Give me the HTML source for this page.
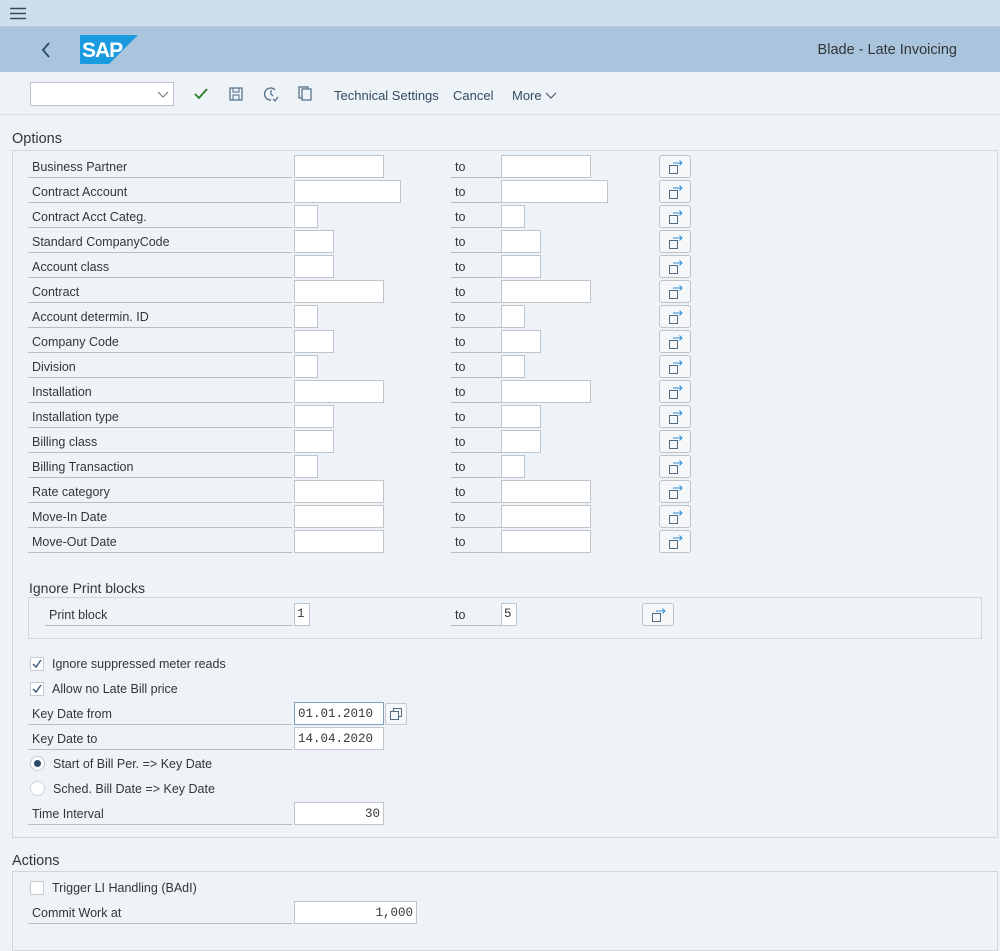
<!DOCTYPE html>
<html><head><meta charset="utf-8"><style>
*{box-sizing:border-box;margin:0;padding:0}
body{width:1000px;height:934px;overflow:hidden;background:#eef3f8;font-family:"Liberation Sans",sans-serif;font-size:12.5px;color:#32363a;position:relative}
.a{position:absolute}
.top{left:0;top:0;width:1000px;height:27px;background:#cfdeeb;border-bottom:1px solid #b9cbdb}
.hdr{left:0;top:27px;width:1000px;height:45px;background:#a9c4dc}
.tb{left:0;top:72px;width:1000px;height:43px;background:#eef3f8;border-bottom:1px solid #d9e1e8}
.lbl{position:absolute;left:28px;width:264px;height:23px;border-bottom:1px solid #b9bec3;padding:5px 0 0 4px}
.to{position:absolute;left:451px;width:50px;height:23px;border-bottom:1px solid #b9bec3;padding:5px 0 0 4px}
.f{position:absolute;height:23px;background:#fff;border:1px solid #bfc5ca;font-family:"Liberation Mono",monospace;font-size:12.5px;padding:4px 3px}
.btn{position:absolute;left:659px;width:32px;height:23px;background:#f6f7f8;border:1px solid #bfc3c7;border-radius:3px}
.btn svg{position:absolute;left:8px;top:3px}
.box{position:absolute;border:1px solid #cfd6dc}
.cb{position:absolute;left:30px;width:14px;height:14px;background:#fff;border:1px solid #c6cbd0}
</style></head><body>
<div class="a top"><svg class="a" style="left:10px;top:7px" width="16" height="13"><path d="M0 1.5H16M0 6.5H16M0 11.5H16" stroke="#354a5f" stroke-width="1.6"/></svg></div>
<div class="a hdr">
<svg class="a" style="left:40px;top:14px" width="12" height="18"><path d="M9 2L3 9L9 16" stroke="#2a4a6b" stroke-width="1.8" fill="none"/></svg>
<svg class="a" style="left:80px;top:8px" width="58" height="29"><polygon points="0,0 58,0 29,29 0,29" fill="#1a9be0"/><text x="2" y="22" font-family="Liberation Sans" font-weight="bold" font-size="21" fill="#fff" letter-spacing="-1">SAP</text></svg>
<div class="a" style="right:43px;top:15px;font-size:14.5px;color:#32363a">Blade - Late Invoicing</div>
</div>
<div class="a tb">
<div class="a" style="left:30px;top:10px;width:144px;height:24px;background:#fff;border:1px solid #bfc5ca"><svg class="a" style="left:126px;top:8px" width="12" height="8"><path d="M1 1L6 6L11 1" stroke="#6a7580" fill="none"/></svg></div>
<svg class="a" style="left:194px;top:16px" width="14" height="12"><path d="M1 6L5 10L13 1" stroke="#2b7c2b" stroke-width="1.8" fill="none"/></svg>
<svg class="a" style="left:229px;top:15px" width="14" height="14"><rect x="1" y="1" width="12" height="12" fill="none" stroke="#4f6b86" stroke-width="1.2"/><rect x="4" y="1" width="6" height="4" fill="none" stroke="#4f6b86"/><rect x="4" y="8" width="6" height="5" fill="none" stroke="#4f6b86"/></svg>
<svg class="a" style="left:263px;top:14px" width="16" height="16"><path d="M12 4A6 6 0 1 0 8 14" stroke="#4f6b86" stroke-width="1.3" fill="none"/><path d="M8 4V8L10 10M10 13L12 15L15 11" stroke="#4f6b86" stroke-width="1.2" fill="none"/></svg>
<svg class="a" style="left:298px;top:14px" width="15" height="15"><rect x="1" y="1" width="9" height="11" fill="none" stroke="#4f6b86" stroke-width="1.2"/><rect x="4" y="3" width="9" height="11" fill="#eef3f8" stroke="#4f6b86" stroke-width="1.2"/></svg>
<div class="a" style="left:334px;top:16px;font-size:13px;color:#354a5f">Technical Settings</div>
<div class="a" style="left:453px;top:16px;font-size:13px;color:#354a5f">Cancel</div>
<div class="a" style="left:512px;top:16px;font-size:13px;color:#354a5f">More</div>
<svg class="a" style="left:545px;top:20px" width="12" height="8"><path d="M1 1L6 6L11 1" stroke="#354a5f" fill="none"/></svg>
</div>

<div class="a" style="left:12px;top:131px;font-size:14.5px">Options</div>
<div class="box" style="left:12px;top:150px;width:986px;height:688px"></div>

<div class="a" style="left:0;top:155px;width:1000px">
<div style="position:absolute;top:0;width:1000px"><div class="lbl">Business Partner</div><div class="f" style="left:294px;width:90px"></div><div class="to">to</div><div class="f" style="left:501px;width:90px"></div><div class="btn"><svg width="16" height="16"><rect x="1.5" y="6.5" width="8" height="8" fill="none" stroke="#4f6b86"/><path d="M5 4H14M11.5 1.5L14 4L11.5 6.5" stroke="#2e8fd6" fill="none"/></svg></div></div>
<div style="position:absolute;top:25px;width:1000px"><div class="lbl">Contract Account</div><div class="f" style="left:294px;width:107px"></div><div class="to">to</div><div class="f" style="left:501px;width:107px"></div><div class="btn"><svg width="16" height="16"><rect x="1.5" y="6.5" width="8" height="8" fill="none" stroke="#4f6b86"/><path d="M5 4H14M11.5 1.5L14 4L11.5 6.5" stroke="#2e8fd6" fill="none"/></svg></div></div>
<div style="position:absolute;top:50px;width:1000px"><div class="lbl">Contract Acct Categ.</div><div class="f" style="left:294px;width:24px"></div><div class="to">to</div><div class="f" style="left:501px;width:24px"></div><div class="btn"><svg width="16" height="16"><rect x="1.5" y="6.5" width="8" height="8" fill="none" stroke="#4f6b86"/><path d="M5 4H14M11.5 1.5L14 4L11.5 6.5" stroke="#2e8fd6" fill="none"/></svg></div></div>
<div style="position:absolute;top:75px;width:1000px"><div class="lbl">Standard CompanyCode</div><div class="f" style="left:294px;width:40px"></div><div class="to">to</div><div class="f" style="left:501px;width:40px"></div><div class="btn"><svg width="16" height="16"><rect x="1.5" y="6.5" width="8" height="8" fill="none" stroke="#4f6b86"/><path d="M5 4H14M11.5 1.5L14 4L11.5 6.5" stroke="#2e8fd6" fill="none"/></svg></div></div>
<div style="position:absolute;top:100px;width:1000px"><div class="lbl">Account class</div><div class="f" style="left:294px;width:40px"></div><div class="to">to</div><div class="f" style="left:501px;width:40px"></div><div class="btn"><svg width="16" height="16"><rect x="1.5" y="6.5" width="8" height="8" fill="none" stroke="#4f6b86"/><path d="M5 4H14M11.5 1.5L14 4L11.5 6.5" stroke="#2e8fd6" fill="none"/></svg></div></div>
<div style="position:absolute;top:125px;width:1000px"><div class="lbl">Contract</div><div class="f" style="left:294px;width:90px"></div><div class="to">to</div><div class="f" style="left:501px;width:90px"></div><div class="btn"><svg width="16" height="16"><rect x="1.5" y="6.5" width="8" height="8" fill="none" stroke="#4f6b86"/><path d="M5 4H14M11.5 1.5L14 4L11.5 6.5" stroke="#2e8fd6" fill="none"/></svg></div></div>
<div style="position:absolute;top:150px;width:1000px"><div class="lbl">Account determin. ID</div><div class="f" style="left:294px;width:24px"></div><div class="to">to</div><div class="f" style="left:501px;width:24px"></div><div class="btn"><svg width="16" height="16"><rect x="1.5" y="6.5" width="8" height="8" fill="none" stroke="#4f6b86"/><path d="M5 4H14M11.5 1.5L14 4L11.5 6.5" stroke="#2e8fd6" fill="none"/></svg></div></div>
<div style="position:absolute;top:175px;width:1000px"><div class="lbl">Company Code</div><div class="f" style="left:294px;width:40px"></div><div class="to">to</div><div class="f" style="left:501px;width:40px"></div><div class="btn"><svg width="16" height="16"><rect x="1.5" y="6.5" width="8" height="8" fill="none" stroke="#4f6b86"/><path d="M5 4H14M11.5 1.5L14 4L11.5 6.5" stroke="#2e8fd6" fill="none"/></svg></div></div>
<div style="position:absolute;top:200px;width:1000px"><div class="lbl">Division</div><div class="f" style="left:294px;width:24px"></div><div class="to">to</div><div class="f" style="left:501px;width:24px"></div><div class="btn"><svg width="16" height="16"><rect x="1.5" y="6.5" width="8" height="8" fill="none" stroke="#4f6b86"/><path d="M5 4H14M11.5 1.5L14 4L11.5 6.5" stroke="#2e8fd6" fill="none"/></svg></div></div>
<div style="position:absolute;top:225px;width:1000px"><div class="lbl">Installation</div><div class="f" style="left:294px;width:90px"></div><div class="to">to</div><div class="f" style="left:501px;width:90px"></div><div class="btn"><svg width="16" height="16"><rect x="1.5" y="6.5" width="8" height="8" fill="none" stroke="#4f6b86"/><path d="M5 4H14M11.5 1.5L14 4L11.5 6.5" stroke="#2e8fd6" fill="none"/></svg></div></div>
<div style="position:absolute;top:250px;width:1000px"><div class="lbl">Installation type</div><div class="f" style="left:294px;width:40px"></div><div class="to">to</div><div class="f" style="left:501px;width:40px"></div><div class="btn"><svg width="16" height="16"><rect x="1.5" y="6.5" width="8" height="8" fill="none" stroke="#4f6b86"/><path d="M5 4H14M11.5 1.5L14 4L11.5 6.5" stroke="#2e8fd6" fill="none"/></svg></div></div>
<div style="position:absolute;top:275px;width:1000px"><div class="lbl">Billing class</div><div class="f" style="left:294px;width:40px"></div><div class="to">to</div><div class="f" style="left:501px;width:40px"></div><div class="btn"><svg width="16" height="16"><rect x="1.5" y="6.5" width="8" height="8" fill="none" stroke="#4f6b86"/><path d="M5 4H14M11.5 1.5L14 4L11.5 6.5" stroke="#2e8fd6" fill="none"/></svg></div></div>
<div style="position:absolute;top:300px;width:1000px"><div class="lbl">Billing Transaction</div><div class="f" style="left:294px;width:24px"></div><div class="to">to</div><div class="f" style="left:501px;width:24px"></div><div class="btn"><svg width="16" height="16"><rect x="1.5" y="6.5" width="8" height="8" fill="none" stroke="#4f6b86"/><path d="M5 4H14M11.5 1.5L14 4L11.5 6.5" stroke="#2e8fd6" fill="none"/></svg></div></div>
<div style="position:absolute;top:325px;width:1000px"><div class="lbl">Rate category</div><div class="f" style="left:294px;width:90px"></div><div class="to">to</div><div class="f" style="left:501px;width:90px"></div><div class="btn"><svg width="16" height="16"><rect x="1.5" y="6.5" width="8" height="8" fill="none" stroke="#4f6b86"/><path d="M5 4H14M11.5 1.5L14 4L11.5 6.5" stroke="#2e8fd6" fill="none"/></svg></div></div>
<div style="position:absolute;top:350px;width:1000px"><div class="lbl">Move-In Date</div><div class="f" style="left:294px;width:90px"></div><div class="to">to</div><div class="f" style="left:501px;width:90px"></div><div class="btn"><svg width="16" height="16"><rect x="1.5" y="6.5" width="8" height="8" fill="none" stroke="#4f6b86"/><path d="M5 4H14M11.5 1.5L14 4L11.5 6.5" stroke="#2e8fd6" fill="none"/></svg></div></div>
<div style="position:absolute;top:375px;width:1000px"><div class="lbl">Move-Out Date</div><div class="f" style="left:294px;width:90px"></div><div class="to">to</div><div class="f" style="left:501px;width:90px"></div><div class="btn"><svg width="16" height="16"><rect x="1.5" y="6.5" width="8" height="8" fill="none" stroke="#4f6b86"/><path d="M5 4H14M11.5 1.5L14 4L11.5 6.5" stroke="#2e8fd6" fill="none"/></svg></div></div>
</div>

<div class="a" style="left:29px;top:580px;font-size:14px">Ignore Print blocks</div>
<div class="box" style="left:28px;top:597px;width:954px;height:42px"></div>
<div class="a" style="left:0;top:603px;width:1000px">
<div class="lbl" style="left:45px;width:247px">Print block</div><div class="f" style="left:294px;width:16px;padding:3px 2px">1</div>
<div class="to">to</div><div class="f" style="left:501px;width:16px;padding:3px 2px">5</div>
<div class="btn" style="left:642px"><svg width="16" height="16"><rect x="1.5" y="6.5" width="8" height="8" fill="none" stroke="#4f6b86"/><path d="M5 4H14M11.5 1.5L14 4L11.5 6.5" stroke="#2e8fd6" fill="none"/></svg></div>
</div>

<div class="cb" style="top:657px"><svg width="12" height="12" style="position:absolute;left:0;top:0"><path d="M2 6L5 9L10 2" stroke="#3a5878" stroke-width="1.4" fill="none"/></svg></div>
<div class="a" style="left:52px;top:657px">Ignore suppressed meter reads</div>
<div class="cb" style="top:682px"><svg width="12" height="12" style="position:absolute;left:0;top:0"><path d="M2 6L5 9L10 2" stroke="#3a5878" stroke-width="1.4" fill="none"/></svg></div>
<div class="a" style="left:52px;top:682px">Allow no Late Bill price</div>
<div class="lbl" style="top:702px">Key Date from</div>
<div class="f" style="left:294px;top:702px;width:90px;border-color:#7f9fbf">01.01.2010</div>
<div class="a" style="left:385px;top:703px;width:22px;height:22px;background:#f6f7f8;border:1px solid #c6cad0;border-radius:2px"><svg width="14" height="14" style="position:absolute;left:3px;top:3px"><rect x="4.5" y="1.5" width="8" height="8" fill="none" stroke="#4f6b86"/><rect x="1.5" y="4.5" width="8" height="8" fill="#f6f7f8" stroke="#4f6b86"/></svg></div>
<div class="lbl" style="top:727px">Key Date to</div>
<div class="f" style="left:294px;top:727px;width:90px">14.04.2020</div>
<div class="a" style="left:30px;top:756px;width:15px;height:15px;border-radius:50%;background:#fff;border:1px solid #c6cbd0"><div style="position:absolute;left:3px;top:3px;width:7px;height:7px;border-radius:50%;background:#2a4a6b"></div></div>
<div class="a" style="left:53px;top:757px">Start of Bill Per. =&gt; Key Date</div>
<div class="a" style="left:30px;top:781px;width:15px;height:15px;border-radius:50%;background:#fff;border:1px solid #d0d4d8"></div>
<div class="a" style="left:53px;top:782px">Sched. Bill Date =&gt; Key Date</div>
<div class="lbl" style="top:802px">Time Interval</div>
<div class="f" style="left:294px;top:802px;width:90px;text-align:right">30</div>

<div class="a" style="left:12px;top:853px;font-size:14.5px">Actions</div>
<div class="box" style="left:12px;top:871px;width:986px;height:80px"></div>
<div class="cb" style="top:881px"></div>
<div class="a" style="left:52px;top:881px">Trigger LI Handling (BAdI)</div>
<div class="lbl" style="top:901px">Commit Work at</div>
<div class="f" style="left:294px;top:901px;width:123px;text-align:right">1,000</div>
</body></html>
